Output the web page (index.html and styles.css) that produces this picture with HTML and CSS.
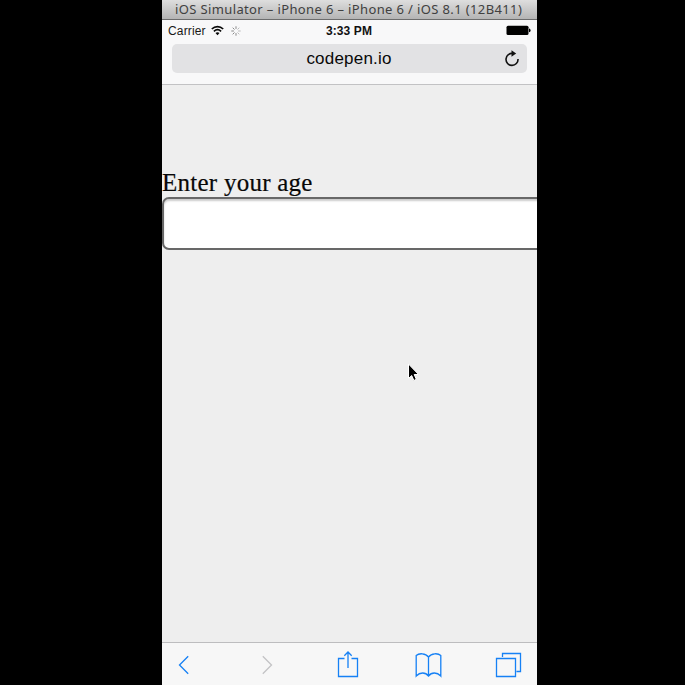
FILE: index.html
```html
<!DOCTYPE html>
<html lang="en">
<head>
<meta charset="utf-8">
<title>iOS Simulator</title>
<link rel="stylesheet" href="styles.css">
</head>
<body>
<div class="simulator">
  <header class="titlebar"><span class="window-title">iOS Simulator – iPhone 6 – iPhone 6 / iOS 8.1 (12B411)</span></header>
  <div class="browser-head">
    <div class="status">
      <div class="status-left">
        <span class="carrier">Carrier</span>
        <svg class="wifi" width="13" height="11" viewBox="0 0 13 11" fill="none" stroke="#080808" stroke-width="1.7">
          <path d="M.8 4C4.1.8 8.9.8 12.2 4M2.9 6.3C5 4.4 8 4.4 10.1 6.3"/>
          <path d="M4.5 8.1Q6.5 6.5 8.500 8.1L6.5 10.2Z" fill="#080808" stroke="none"/>
        </svg>
        <svg class="spinner" width="10" height="10" viewBox="0 0 10 10" stroke="#888" stroke-width="1">
          <path d="M5 .3v2.6M5 7.1v2.6M.3 5h2.6M1.7 1.7l1.8 1.8M1.7 8.3l1.8-1.8"/>
          <path d="M7.1 5h2.6M6.5 3.5l1.8-1.8M6.5 6.5l1.8 1.8" stroke="#bbb"/>
        </svg>
      </div>
      <span class="clock">3:33 PM</span>
      <svg class="battery" width="25" height="11" viewBox="0 0 25 11">
        <rect x=".5" y=".7" width="22" height="9.3" rx="1.5"/>
        <path d="M23 3.5q1.6.3 1.6 1.9T23 7.2z"/>
      </svg>
    </div>
    <div class="address">
      <span class="domain">codepen.io</span>
      <svg class="reload" width="16" height="18" viewBox="0 0 16 18">
        <path d="M9 3.500A6 6 0 1 0 14 9" fill="none" stroke="#111" stroke-width="1.6"/>
        <path d="M7.500 .3L12.200 3.500 7.500 6.700z" fill="#111"/>
      </svg>
    </div>
  </div>
  <main class="page">
    <label class="label" for="age">Enter your age</label>
    <input class="age" id="age" type="text">
  </main>
  <nav class="toolbar">
    <svg class="tool" width="28" height="28" viewBox="0 0 28 28"><path d="M16.2 5.3L7.5 14l8.7 8.7"/></svg>
    <svg class="tool disabled" width="28" height="28" viewBox="0 0 28 28"><path d="M9.800 5.3L18.500 14l-8.7 8.7"/></svg>
    <svg class="tool" width="28" height="28" viewBox="0 0 28 28"><path d="M11.500 7.5H5.500v18h19v-18H18.500M15 17V1M11.3 4.7L15 1l3.7 3.7"/></svg>
    <svg class="tool" width="28" height="28" viewBox="0 0 28 28"><path d="M14.500 6C11.500 2 5 2 2.200 4.500V25C6 21 11.500 21 14.500 25C17.500 21 23 21 26.800 25V4.500C24 2 17.500 2 14.500 6V25"/></svg>
    <svg class="tool" width="28" height="28" viewBox="0 0 28 28"><path d="M2.500 7.500h19v18h-19zM8.500 6V2.500h18v18h-4"/></svg>
  </nav>
  <svg class="cursor" width="13" height="19" viewBox="0 0 13 19"><path d="M1.500 1V15.500L4.700 12.500 6.900 17.500 9.300 16.300 7.200 11.500H11.600Z" fill="#000" stroke="#fff"/></svg>
</div>
</body>
</html>
```
FILE: styles.css
```css
* { box-sizing: border-box; }
body {
  margin: 0;
  height: 685px;
  background: #000;
  overflow: hidden;
}
.simulator {
  position: relative;
  width: 375px;
  height: 685px;
  margin-left: 162px;
  display: flex;
  flex-direction: column;
  background: #eee;
  overflow: hidden;
  font-family: "Liberation Sans", Arial, sans-serif;
}
.titlebar {
  flex: none;
  height: 20px;
  padding-left: 13px;
  background: linear-gradient(#dedede, #b4b4b4);
  border-bottom: 1px solid #6c6c6c;
  white-space: nowrap;
}
.window-title {
  display: block;
  font: 13px/19px "Noto Sans", sans-serif;
  letter-spacing: 0.37px;
  color: #404040;
}
.browser-head {
  flex: none;
  height: 65px;
  background: #f8f8f9;
  border-bottom: 1px solid #c2c2c4;
}
.status {
  display: grid;
  grid-template-columns: 1fr auto 1fr;
  align-items: center;
  height: 20px;
  padding: 1px 6px 0 6px;
}
.status-left {
  display: flex;
  align-items: center;
}
.carrier {
  font-size: 12px;
  color: #181818;
  letter-spacing: 0.15px;
}
.wifi { margin-left: 5px; }
.spinner { margin-left: 7px; }
.clock {
  font-size: 12px;
  font-weight: bold;
  letter-spacing: 0.1px;
  margin-right: 1px;
  color: #111;
}
.battery { justify-self: end; }
.address {
  display: grid;
  grid-template-columns: 1fr auto 1fr;
  align-items: center;
  height: 29px;
  margin: 4px 10px 0;
  background: #e2e2e4;
  border-radius: 5px;
}
.domain {
  grid-column: 2;
  font-size: 17px;
  letter-spacing: 0.2px;
  margin-right: 1px;
  color: #080808;
}
.reload {
  justify-self: end;
  margin-right: 7px;
}
.page {
  flex: 1;
  padding-top: 84px;
  overflow: hidden;
}
.label {
  display: block;
  height: 28px;
  font: 25px/27px "Liberation Serif", serif;
  letter-spacing: 0.25px;
  -webkit-text-stroke: 0.2px #080808;
  color: #080808;
}
.age {
  display: block;
  width: 420px;
  height: 53px;
  border: 2px solid #686868;
  border-radius: 7px;
  background: #fff;
  box-shadow: inset 0 2px 2px #ccc;
}
.toolbar {
  flex: none;
  height: 43px;
  padding: 8px 15px 0 10px;
  display: flex;
  justify-content: space-between;
  background: #f7f7f7;
  border-top: 1px solid #bdbdbf;
}
.tool {
  fill: none;
  stroke: #1681f5;
  stroke-width: 1.3;
}
.disabled { stroke: #c3c3c5; }
.cursor {
  position: absolute;
  left: 245px;
  top: 363px;
}
```
